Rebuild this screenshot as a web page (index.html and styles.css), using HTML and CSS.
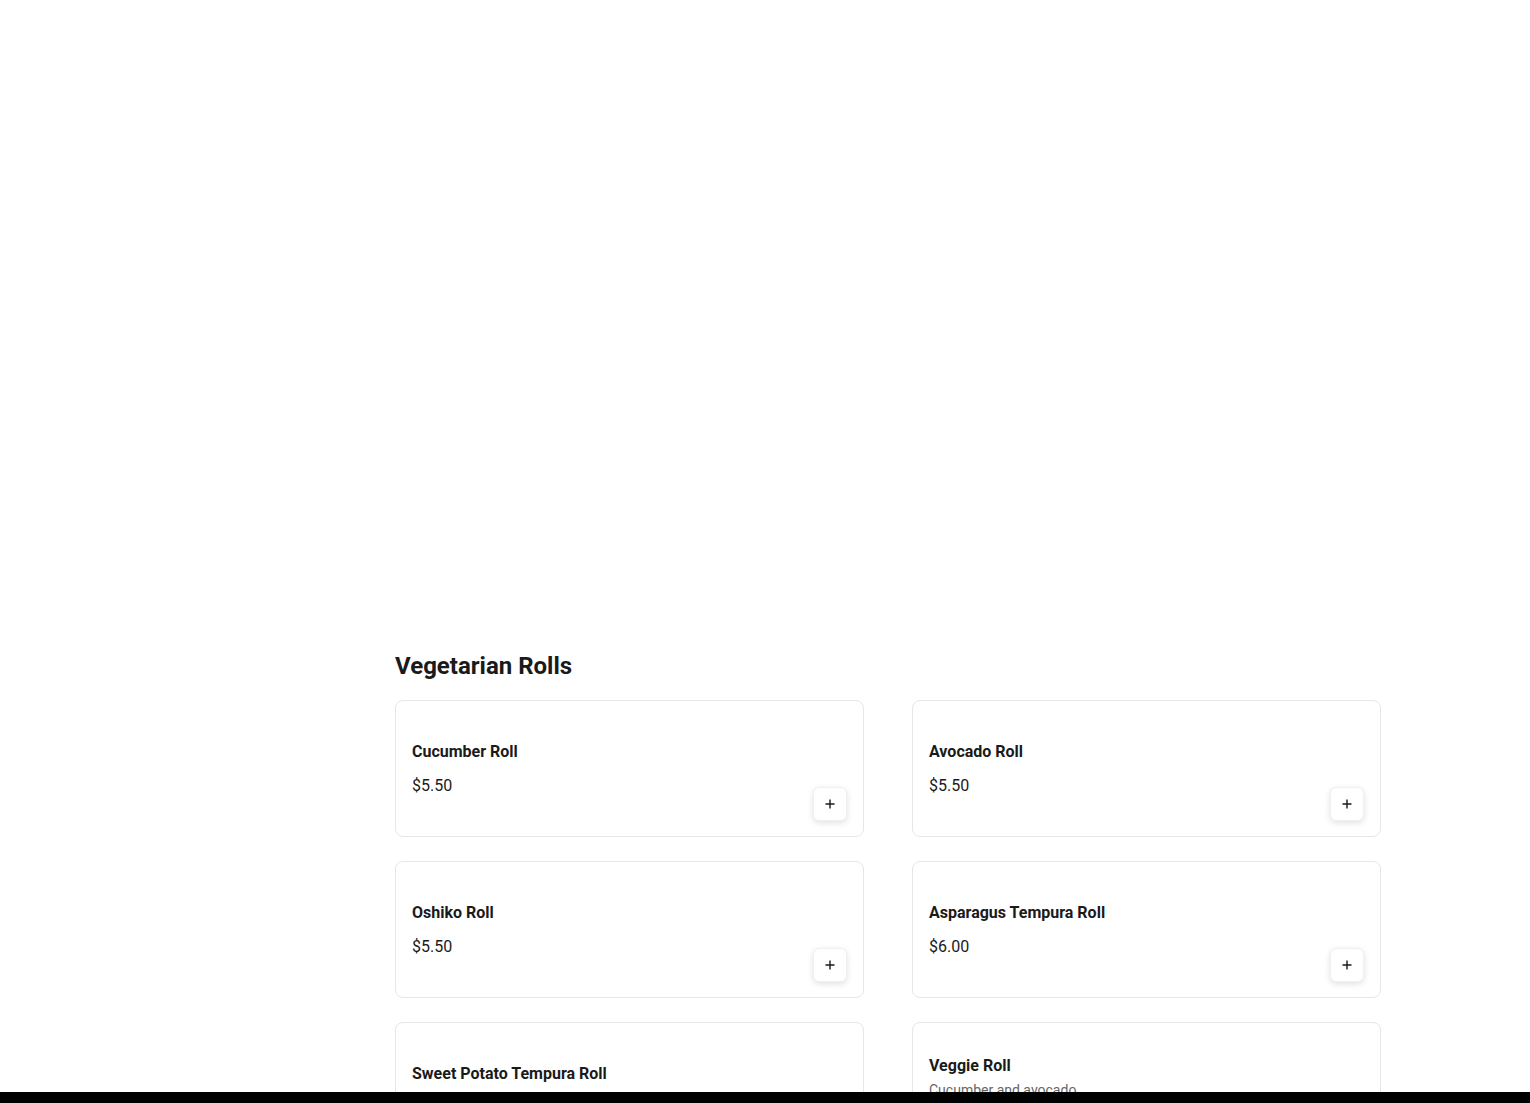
FILE: index.html
```html
<!DOCTYPE html>
<html lang="en">
<head>
  <meta charset="UTF-8">
  <meta name="viewport" content="width=device-width, initial-scale=1.0">
  <title>Menu - Vegetarian Rolls</title>
  <link rel="stylesheet" href="styles.css">
</head>
<body>
  <div class="page">
    <div class="hero"></div>

    <section class="menu-section">
      <h2 class="menu-section__title">Vegetarian Rolls</h2>

      <div class="menu-grid">
        <div class="menu-card">
          <div class="menu-card__info">
            <h3 class="menu-card__name">Cucumber Roll</h3>
            <p class="menu-card__price">$5.50</p>
          </div>
          <button class="add-button" aria-label="Add Cucumber Roll">
            <svg viewBox="0 0 12 12" width="12" height="12"><path d="M6 1.5v9M1.5 6h9" stroke="#1a1a1a" stroke-width="1.4" fill="none"/></svg>
          </button>
        </div>

        <div class="menu-card">
          <div class="menu-card__info">
            <h3 class="menu-card__name">Avocado Roll</h3>
            <p class="menu-card__price">$5.50</p>
          </div>
          <button class="add-button" aria-label="Add Avocado Roll">
            <svg viewBox="0 0 12 12" width="12" height="12"><path d="M6 1.5v9M1.5 6h9" stroke="#1a1a1a" stroke-width="1.4" fill="none"/></svg>
          </button>
        </div>

        <div class="menu-card">
          <div class="menu-card__info">
            <h3 class="menu-card__name">Oshiko Roll</h3>
            <p class="menu-card__price">$5.50</p>
          </div>
          <button class="add-button" aria-label="Add Oshiko Roll">
            <svg viewBox="0 0 12 12" width="12" height="12"><path d="M6 1.5v9M1.5 6h9" stroke="#1a1a1a" stroke-width="1.4" fill="none"/></svg>
          </button>
        </div>

        <div class="menu-card">
          <div class="menu-card__info">
            <h3 class="menu-card__name">Asparagus Tempura Roll</h3>
            <p class="menu-card__price">$6.00</p>
          </div>
          <button class="add-button" aria-label="Add Asparagus Tempura Roll">
            <svg viewBox="0 0 12 12" width="12" height="12"><path d="M6 1.5v9M1.5 6h9" stroke="#1a1a1a" stroke-width="1.4" fill="none"/></svg>
          </button>
        </div>

        <div class="menu-card">
          <div class="menu-card__info">
            <h3 class="menu-card__name">Sweet Potato Tempura Roll</h3>
            <p class="menu-card__price">$6.00</p>
          </div>
          <button class="add-button" aria-label="Add Sweet Potato Tempura Roll">
            <svg viewBox="0 0 12 12" width="12" height="12"><path d="M6 1.5v9M1.5 6h9" stroke="#1a1a1a" stroke-width="1.4" fill="none"/></svg>
          </button>
        </div>

        <div class="menu-card">
          <div class="menu-card__info">
            <h3 class="menu-card__name">Veggie Roll</h3>
            <p class="menu-card__desc">Cucumber and avocado</p>
            <p class="menu-card__price">$6.00</p>
          </div>
          <button class="add-button" aria-label="Add Veggie Roll">
            <svg viewBox="0 0 12 12" width="12" height="12"><path d="M6 1.5v9M1.5 6h9" stroke="#1a1a1a" stroke-width="1.4" fill="none"/></svg>
          </button>
        </div>
      </div>
    </section>
  </div>

  <div class="bottom-bar"></div>
</body>
</html>
```

FILE: styles.css
```css
:root {
  --text-dark: #1a1a1a;
  --text-muted: #666;
  --border-light: #e6e6e6;
  --white: #fff;

  --radius-sm: 6px;
  --radius-md: 8px;
  --shadow-button: 0 2px 6px rgba(0, 0, 0, 0.12);
}

body {
  margin: 0;
  font-family: Roboto, "Liberation Sans", sans-serif;
  color: var(--text-dark);
  background: var(--white);
}

.page {
  padding: 0 149px 0 395px;
}

.hero {
  height: 650px;
}

.menu-section__title {
  margin: 0 0 18px;
  font-size: 24px;
  line-height: 32px;
  font-weight: 700;
}

.menu-grid {
  display: grid;
  grid-template-columns: 1fr 1fr;
  column-gap: 48px;
  row-gap: 24px;
}

.menu-card {
  display: flex;
  justify-content: space-between;
  min-height: 137px;
  padding: 16px 16px 15px;
  box-sizing: border-box;
  border: 1px solid var(--border-light);
  border-radius: var(--radius-md);
  background: var(--white);
}

.menu-card__info {
  display: flex;
  flex-direction: column;
  justify-content: center;
}

.menu-card__name {
  margin: 0 0 4px;
  font-size: 16px;
  line-height: 24px;
  font-weight: 700;
}

.menu-card__desc {
  margin: 0;
  font-size: 14px;
  line-height: 16px;
  color: var(--text-muted);
}

.menu-card__price {
  margin: 6px 0 0;
  font-size: 16px;
  line-height: 24px;
}

.add-button {
  align-self: flex-end;
  display: flex;
  align-items: center;
  justify-content: center;
  width: 34px;
  height: 34px;
  padding: 0;
  border: 1px solid #f0f0f0;
  border-radius: var(--radius-sm);
  background: var(--white);
  box-shadow: var(--shadow-button);
  cursor: pointer;
}

.bottom-bar {
  position: fixed;
  left: 0;
  right: 0;
  bottom: 0;
  height: 11px;
  background: #000;
}
```
